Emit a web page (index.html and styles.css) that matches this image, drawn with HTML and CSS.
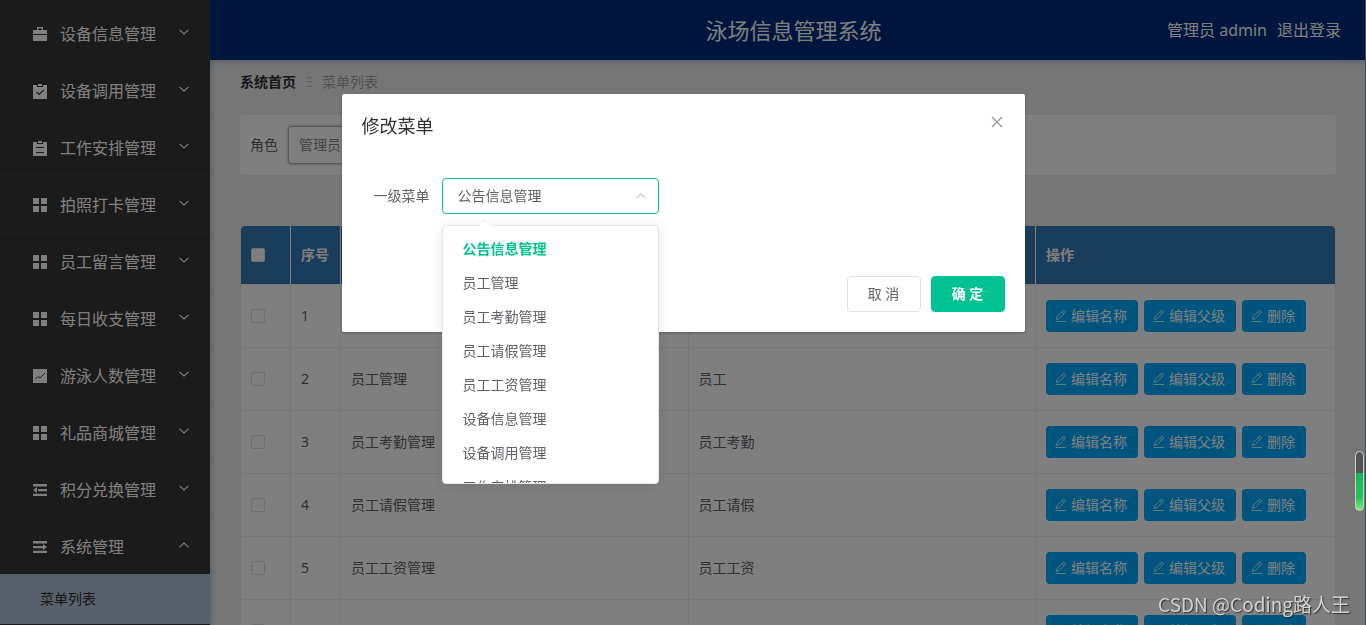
FILE: index.html
```html
<!DOCTYPE html>
<html lang="zh-CN">
<head>
<meta charset="utf-8">
<meta name="viewport" content="width=device-width, initial-scale=1">
<title>泳场信息管理系统</title>
<link rel="stylesheet" href="styles.css">
</head>
<body>
<svg class="sprite" aria-hidden="true">
  <symbol id="down" viewBox="0 0 12 12"><path d="M1.500 3.800 6 8l4.500-4.200" fill="none" stroke="currentColor" stroke-width="1.100"/></symbol>
  <symbol id="up" viewBox="0 0 12 12"><path d="M1.500 8.200 6 4l4.500 4.200" fill="none" stroke="currentColor" stroke-width="1.100"/></symbol>
  <symbol id="case" viewBox="0 -1 14 16"><path d="M4 3V0h6v3h4v4H0V3h4zm1.300 0h3.400V1.300H5.300zM0 8h14v6H0z" fill="currentColor" fill-rule="evenodd"/></symbol>
  <symbol id="check" viewBox="0 -1 14 16"><path d="M0 1h4v2h6V1h4v14H0z" fill="currentColor"/><path d="M5 0h4v2H5z" fill="currentColor"/><path d="m3.500 8 2.500 2.500L10.800 6" fill="none" stroke="#363636" stroke-width="1.100"/></symbol>
  <symbol id="order" viewBox="0 -1 14 16"><path d="M0 1h4v2h6V1h4v14H0z" fill="currentColor"/><path d="M5 0h4v2H5z" fill="currentColor"/><path d="M3 6.500h8M3 11.500h8" stroke="#363636"/></symbol>
  <symbol id="grid" viewBox="0 -1 14 16"><path d="M0 0h6v6H0zM8 0h6v6H8zM0 8h6v6H0zM8 8h6v6H8z" fill="currentColor"/></symbol>
  <symbol id="chart" viewBox="0 -1 14 16"><path d="M0 0h14v14H0z" fill="currentColor"/><path d="m2.500 10 2.500-2.500L7 9l3.500-3.500M11 4.500h1" fill="none" stroke="#363636"/></symbol>
  <symbol id="fold" viewBox="0 -2 14 16"><path d="M0 0h14v2.400H0zM5 5h9v2.200H5zM0 9.800h14V12H0zM4 3v6L0 6z" fill="currentColor"/></symbol>
  <symbol id="unfold" viewBox="0 -2 14 16"><path d="M0 0h14v2.400H0zM0 5h10v2.200H0zM0 9.800h14V12H0zM10 3v6l4-3z" fill="currentColor"/></symbol>
  <symbol id="edit" viewBox="0 0 14 14"><path d="M1.500 12.500h10.500M2.300 10.500l.7-3L9 1.700a1.200 1.200 0 0 1 1.700 0l.3.3a1.200 1.200 0 0 1 0 1.700L5 9.700zM8 2.700l2 2" fill="none" stroke="currentColor" stroke-width=".8"/></symbol>
  <symbol id="close" viewBox="0 0 12 12"><path d="m1 1 10 10M11 1 1 11" fill="none" stroke="currentColor" stroke-width="1.200"/></symbol>
</svg>

<div class="app">
  <nav class="sidebar">
    <button class="menu"><svg class="menu-icon"><use href="#case"/></svg><span>设备信息管理</span><svg class="arrow"><use href="#down"/></svg></button>
    <button class="menu"><svg class="menu-icon"><use href="#check"/></svg><span>设备调用管理</span><svg class="arrow"><use href="#down"/></svg></button>
    <button class="menu"><svg class="menu-icon"><use href="#order"/></svg><span>工作安排管理</span><svg class="arrow"><use href="#down"/></svg></button>
    <button class="menu"><svg class="menu-icon"><use href="#grid"/></svg><span>拍照打卡管理</span><svg class="arrow"><use href="#down"/></svg></button>
    <button class="menu"><svg class="menu-icon"><use href="#grid"/></svg><span>员工留言管理</span><svg class="arrow"><use href="#down"/></svg></button>
    <button class="menu"><svg class="menu-icon"><use href="#grid"/></svg><span>每日收支管理</span><svg class="arrow"><use href="#down"/></svg></button>
    <button class="menu"><svg class="menu-icon"><use href="#chart"/></svg><span>游泳人数管理</span><svg class="arrow"><use href="#down"/></svg></button>
    <button class="menu"><svg class="menu-icon"><use href="#grid"/></svg><span>礼品商城管理</span><svg class="arrow"><use href="#down"/></svg></button>
    <button class="menu"><svg class="menu-icon"><use href="#fold"/></svg><span>积分兑换管理</span><svg class="arrow"><use href="#down"/></svg></button>
    <button class="menu"><svg class="menu-icon"><use href="#unfold"/></svg><span>系统管理</span><svg class="arrow"><use href="#up"/></svg></button>
    <a class="submenu" href="#">菜单列表</a>
  </nav>

  <div class="body">
    <header class="header">
      <h1 class="title">泳场信息管理系统</h1>
      <div class="user"><span>管理员 admin</span><a href="#">退出登录</a></div>
    </header>

    <main class="main">
      <div class="crumbs"><a class="home" href="#">系统首页</a><span class="sep">Ξ</span><span>菜单列表</span></div>
      <div class="filter">
        <label for="role">角色</label>
        <select id="role" class="role"><option>管理员</option></select>
      </div>
      <table class="table">
        <colgroup><col class="c-narrow"><col class="c-narrow"><col><col><col class="c-action"></colgroup>
        <thead>
          <tr><th><input type="checkbox" aria-label="全选"></th><th>序号</th><th></th><th></th><th>操作</th></tr>
        </thead>
        <tbody>
          <tr><td><input type="checkbox" aria-label="1"></td><td>1</td><td></td><td></td><td><div class="actions"><button><svg><use href="#edit"/></svg>编辑名称</button><button><svg><use href="#edit"/></svg>编辑父级</button><button><svg><use href="#edit"/></svg>删除</button></div></td></tr>
          <tr><td><input type="checkbox" aria-label="2"></td><td>2</td><td>员工管理</td><td>员工</td><td><div class="actions"><button><svg><use href="#edit"/></svg>编辑名称</button><button><svg><use href="#edit"/></svg>编辑父级</button><button><svg><use href="#edit"/></svg>删除</button></div></td></tr>
          <tr><td><input type="checkbox" aria-label="3"></td><td>3</td><td>员工考勤管理</td><td>员工考勤</td><td><div class="actions"><button><svg><use href="#edit"/></svg>编辑名称</button><button><svg><use href="#edit"/></svg>编辑父级</button><button><svg><use href="#edit"/></svg>删除</button></div></td></tr>
          <tr><td><input type="checkbox" aria-label="4"></td><td>4</td><td>员工请假管理</td><td>员工请假</td><td><div class="actions"><button><svg><use href="#edit"/></svg>编辑名称</button><button><svg><use href="#edit"/></svg>编辑父级</button><button><svg><use href="#edit"/></svg>删除</button></div></td></tr>
          <tr><td><input type="checkbox" aria-label="5"></td><td>5</td><td>员工工资管理</td><td>员工工资</td><td><div class="actions"><button><svg><use href="#edit"/></svg>编辑名称</button><button><svg><use href="#edit"/></svg>编辑父级</button><button><svg><use href="#edit"/></svg>删除</button></div></td></tr>
          <tr><td><input type="checkbox" aria-label="6"></td><td></td><td></td><td></td><td><div class="actions"><button><svg><use href="#edit"/></svg>编辑名称</button><button><svg><use href="#edit"/></svg>编辑父级</button><button><svg><use href="#edit"/></svg>删除</button></div></td></tr>
        </tbody>
      </table>
    </main>
  </div>
</div>

<div class="overlay">
  <section class="dialog" role="dialog" aria-labelledby="dialog-title">
    <div class="dialog-head">
      <h2 id="dialog-title">修改菜单</h2>
      <button class="close" aria-label="关闭"><svg><use href="#close"/></svg></button>
    </div>
    <div class="field">
      <label for="parent">一级菜单</label>
      <div class="picker">
        <select id="parent"><option>公告信息管理</option></select>
        <svg class="picker-arrow"><use href="#up"/></svg>
        <div class="dropdown">
          <ul class="options" role="listbox" aria-label="一级菜单">
            <li role="option" aria-selected="true" class="selected">公告信息管理</li>
            <li role="option">员工管理</li>
            <li role="option">员工考勤管理</li>
            <li role="option">员工请假管理</li>
            <li role="option">员工工资管理</li>
            <li role="option">设备信息管理</li>
            <li role="option">设备调用管理</li>
            <li role="option">工作安排管理</li>
          </ul>
        </div>
      </div>
    </div>
    <div class="dialog-foot">
      <button class="btn">取 消</button>
      <button class="btn primary">确 定</button>
    </div>
  </section>
</div>

<div class="gauge" aria-hidden="true"></div>
<div class="watermark">CSDN @Coding路人王</div>
</body>
</html>
```
FILE: styles.css
```css
* { box-sizing: border-box; }

body {
  margin: 0;
  font-family: "Noto Sans", "Noto Sans CJK SC", sans-serif;
  font-size: 14px;
  line-height: 20px;
  color: #606266;
}

button, select, input { font: inherit; color: inherit; margin: 0; }
a { color: inherit; text-decoration: none; }
.sprite { display: none; }

.app {
  display: flex;
  height: 100vh;
  overflow: hidden;
  background: #ededed;
  border-right: 1px solid #5aa8e0;
}

/* Sidebar */
.sidebar {
  flex: 0 0 210px;
  padding-top: 4px;
  background: #363636;
  color: #fff;
  box-shadow: 1px 0 6px rgba(0, 80, 140, .35);
  z-index: 1;
}
.menu {
  display: flex;
  align-items: center;
  width: 100%;
  height: 57px;
  padding: 2px 20px 0 33px;
  border: 0;
  border-top: 1px solid #3f3f3f;
  background: none;
  font-size: 16px;
  text-align: left;
}
.menu-icon { width: 14px; height: 16px; margin-right: 13px; }
.arrow { width: 12px; height: 12px; margin: 0 0 4px auto; }
.submenu {
  display: flex;
  align-items: center;
  height: 50px;
  padding-left: 40px;
  background: #b0c0d6;
  color: #333;
}

/* Header */
.body { flex: 1; min-width: 0; }
.header {
  display: grid;
  grid-template-columns: 1fr auto 1fr;
  align-items: center;
  height: 60px;
  padding: 0 24px 0 36px;
  background: #002a7a;
  color: #fff;
  box-shadow: 0 1px 6px rgba(0, 40, 120, .3);
}
.title { grid-column: 2; margin: 0; font-size: 22px; font-weight: 400; line-height: 32px; }
.user { display: flex; justify-content: flex-end; gap: 10px; font-size: 16px; white-space: nowrap; }

/* Content */
.main { padding: 12px 29px 0 30px; }
.crumbs { display: flex; color: #a0a3a9; }
.home { font-weight: 700; color: #303133; }
.sep { width: 26px; text-align: center; color: #c0c4cc; }
.filter {
  display: flex;
  align-items: center;
  gap: 10px;
  height: 60px;
  margin: 23px 0 51px;
  padding: 0 10px;
  background: #fff;
  border-radius: 4px;
}
.role {
  appearance: none;
  width: 190px;
  height: 38px;
  padding: 0 10px;
  border: 1px solid #b0b0b0;
  border-radius: 4px;
  background: #fff;
  box-shadow: 0 0 3px rgba(0, 0, 0, .4);
  color: #888;
}
.table {
  width: calc(100% - 2px);
  margin: 0 1px;
  table-layout: fixed;
  border-collapse: separate;
  border-spacing: 0;
  background: #fff;
  border-radius: 4px;
  overflow: hidden;
}
.c-narrow { width: 50px; }
.c-action { width: 299px; }
.table th, .table td {
  padding: 0 10px;
  text-align: left;
  border-right: 1px solid #ebeef5;
  border-bottom: 1px solid #ebeef5;
}
.table td { height: 63px; }
.table th { height: 59px; background: #377ab8; color: #fff; font-weight: 700; border-right-color: #fff; }
.table th:last-child, .table td:last-child { border-right: 0; }
.table input {
  appearance: none;
  display: block;
  width: 14px;
  height: 14px;
  border: 1px solid #dcdfe6;
  border-radius: 2px;
  background: #fff;
}
.actions { display: flex; gap: 6px; }
.actions button {
  display: flex;
  align-items: center;
  height: 32px;
  padding: 0 11px 0 8px;
  border: 0;
  border-radius: 4px;
  background: #00aaff;
  color: #fff;
  white-space: nowrap;
}
.actions svg { width: 14px; height: 14px; margin-right: 3px; }

/* Dialog */
.overlay { position: fixed; inset: 0; z-index: 5; background: rgba(0, 0, 0, .5); }
.dialog {
  width: 50%;
  margin: 15vh auto 0;
  background: #fff;
  border-radius: 2px;
  box-shadow: 0 1px 3px rgba(0, 0, 0, .3);
}
.dialog-head {
  display: flex;
  align-items: flex-start;
  justify-content: space-between;
  padding: 20px 20px 10px;
}
.dialog-head h2 { margin: 0; font-size: 18px; font-weight: 400; line-height: 24px; color: #303133; }
.close { display: flex; margin: 2px 2px 0 0; padding: 0; border: 0; background: none; color: #909399; }
.close svg { width: 12px; height: 12px; }
.field { display: flex; align-items: center; gap: 12px; padding: 30px 32px; }
.picker { position: relative; width: 217px; }
.picker select {
  appearance: none;
  display: block;
  width: 100%;
  height: 36px;
  padding: 0 30px 0 15px;
  border: 1px solid #00c292;
  border-radius: 4px;
  background: #fff;
}
.picker-arrow { position: absolute; right: 12px; top: 12px; width: 12px; height: 12px; color: #c0c4cc; }
.dropdown {
  position: absolute;
  top: 47px;
  left: 0;
  width: 100%;
  background: #fff;
  border: 1px solid #e4e7ed;
  border-radius: 4px;
  box-shadow: 0 2px 12px rgba(0, 0, 0, .1);
}
.dropdown::before {
  content: "";
  position: absolute;
  top: -5px;
  left: 37px;
  width: 8px;
  height: 8px;
  background: #fff;
  border: solid #ebeef5;
  border-width: 1px 0 0 1px;
  transform: rotate(45deg);
}
.options { height: 257px; margin: 0; padding: 6px 0; overflow: hidden; list-style: none; }
.options li { padding: 0 20px; line-height: 34px; }
.options .selected { color: #00c292; font-weight: 700; }
.dialog-foot { display: flex; justify-content: flex-end; gap: 10px; padding: 32px 20px 20px; }
.btn {
  height: 36px;
  min-width: 74px;
  padding: 0 20px;
  border: 1px solid #dcdfe6;
  border-radius: 4px;
  background: #fff;
}
.primary { border-color: #00c292; background: #00c292; color: #fff; font-weight: 700; }

/* Floating items */
.gauge {
  position: fixed;
  right: 2px;
  top: 451px;
  z-index: 6;
  width: 9px;
  height: 60px;
  border: 1px solid #ccc;
  border-radius: 5px;
  background: linear-gradient(#555 0 21px, #16b858 21px, #22c55e 46px, #7cf07c);
}
.watermark {
  position: fixed;
  right: 16px;
  bottom: 6px;
  z-index: 6;
  font-family: "Noto Sans CJK SC", sans-serif;
  font-size: 19px;
  line-height: 30px;
  color: #d2d2d2;
  text-shadow: 1px 1px 1px #333;
}
```
